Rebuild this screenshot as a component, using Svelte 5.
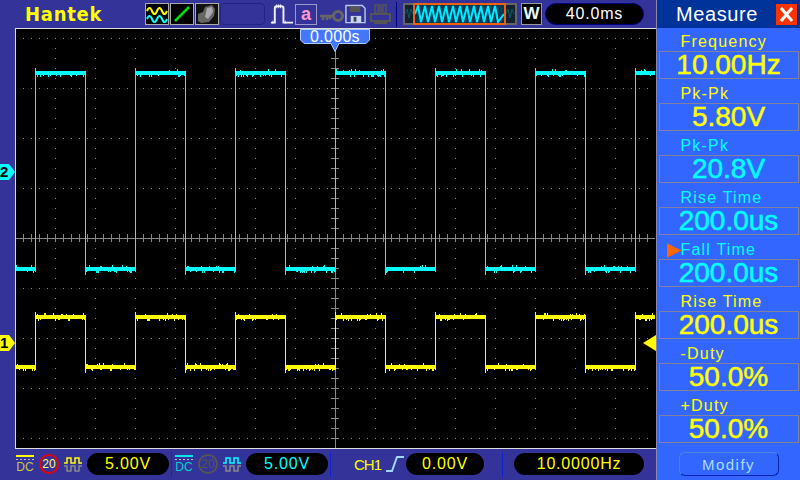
<script>
  const measures = [
    { label: 'Frequency', value: '10.00Hz', color: '#ffff00' },
    { label: 'Pk-Pk', value: '5.80V', color: '#ffff00' },
    { label: 'Pk-Pk', value: '20.8V', color: '#00ffff' },
    { label: 'Rise Time', value: '200.0us', color: '#00ffff' },
    { label: 'Fall Time', value: '200.0us', color: '#00ffff', selected: true },
    { label: 'Rise Time', value: '200.0us', color: '#ffff00' },
    { label: '-Duty', value: '50.0%', color: '#ffff00' },
    { label: '+Duty', value: '50.0%', color: '#ffff00' }
  ];

  // seeded noise so every render gives the same trace
  let seed = 7;
  function rnd() {
    seed = (seed * 16807) % 2147483647;
    return seed / 2147483647;
  }

  function band(x0, x1, top, h) {
    let d = '';
    for (let x = x0; x < x1; x++) {
      let t = top;
      let b = top + h;
      const r = rnd();
      if (r < 0.1) t -= 1 + Math.floor(rnd() * 2);
      if (r > 0.78) b += 1 + Math.floor(rnd() * 2);
      d += `M${x + 0.5} ${t}V${b}`;
    }
    return d;
  }

  function trace(high, low, h) {
    let d = band(16, 35, low, h);
    for (let x = 35; x < 655; x += 100) {
      d += `M${x + 0.5} ${high - 3}V${low + h + 1}`;
      d += band(x + 1, Math.min(x + 50, 655), high, h);
      if (x + 50 < 655) {
        d += `M${x + 50.5} ${high}V${low + h + 4}`;
        d += band(x + 51, Math.min(x + 100, 635), low, h);
      }
    }
    return d;
  }

  const cyanPath = trace(71, 267, 4);
  const yellowPath = trace(315, 365, 4);

  let gridDots = '';
  for (let y = 38; y < 448; y += 50) {
    for (let x = 23; x < 655; x += 8) gridDots += `M${x} ${y}h1`;
  }
  for (let x = 55; x < 655; x += 40) {
    for (let y = 38; y < 448; y += 10) gridDots += `M${x} ${y}h1`;
  }

  let axes = 'M16 238.5H655M335.5 50V448';
  for (let x = 23; x < 655; x += 8) axes += `M${x}.5 234V242`;
  for (let y = 58; y < 448; y += 10) axes += `M331 ${y}.5H339`;

  let zig = 'M415 14';
  for (let x = 416; x < 500; x += 7) zig += `L${x + 2} 6L${x + 5} 22`;
  zig += 'L504 14';
</script>

<div class="scope">
  <div class="left">
    <header class="topbar">
      <span class="brand">Hantek</span>
      <div class="tools">
        <svg class="tool" viewBox="0 0 24 22">
          <rect x="0.5" y="0.5" width="23" height="21" fill="#000" stroke="#aaa" />
          <path d="M2 8q2.500-6 5 0t5 0t5 0t5 0" fill="none" stroke="#ff0" stroke-width="2" />
          <path d="M2 16q2.500-6 5 0t5 0t5 0t5 0" fill="none" stroke="#0ff" stroke-width="2" />
        </svg>
        <svg class="tool" viewBox="0 0 24 22">
          <rect x="0.5" y="0.500" width="23" height="21" fill="#000" stroke="#aaa" />
          <path d="M5 18L19 4" stroke="#00e000" stroke-width="2.500" />
        </svg>
        <svg class="tool" viewBox="0 0 24 22">
          <rect x="0.5" y="0.5" width="23" height="21" fill="#111" stroke="#aaa" />
          <path d="M3 18V11L8 9L10 4L17 2L20 6L19 13L14 19L6 20Z" fill="#666" />
          <path d="M12 5L17 4L18 9L13 16L10 14Z" fill="#aaa" />
        </svg>
        <div class="blank"></div>
        <svg class="pulse" viewBox="0 0 26 22">
          <path d="M1 20H5V5Q5 3 7 3H12Q14 3 14 5V20H19H24" fill="none" stroke="#eef" stroke-width="2" />
          <path d="M7 1V5M9 1V5M11 1V5M3 18V21M16 18V21" stroke="#eef" />
        </svg>
        <div class="letter">a</div>
        <svg class="key" viewBox="0 0 24 12">
          <circle cx="18" cy="6" r="4.500" fill="none" stroke="#666" stroke-width="3" />
          <path d="M0 6H14M3 6V10M7 6V10M10 6V9" stroke="#666" stroke-width="2.500" fill="none" />
        </svg>
        <svg class="floppy" viewBox="0 0 22 20">
          <path d="M1 1H18L21 4V19H1Z" fill="none" stroke="#b8c8e8" stroke-width="1.500" />
          <path d="M5 2H16V8H5Z" fill="#555" />
          <path d="M6 12H17V19H6Z" fill="#c8d8f0" />
          <path d="M9 13H12V18H9Z" fill="#445" />
        </svg>
        <svg class="printer" viewBox="0 0 21 21">
          <path d="M5 1H16V9H5ZM7 3H14M7 5H14M7 7H14" fill="none" stroke="#555" stroke-width="1.500" />
          <path d="M1 10H20V17H1Z" fill="none" stroke="#555" stroke-width="2" />
          <path d="M4 18H17V20H4Z" fill="#555" />
        </svg>
      </div>
      <i class="sep"></i>
      <svg class="overview" viewBox="403 0 115 28">
        <rect x="404" y="4" width="112" height="20" fill="#13222e" stroke="#666" stroke-width="2" />
        <path d="M405 14l2-5 2 9 2-9 2 5M506 14l2-5 2 9 2-9 2 5" fill="none" stroke="#0a5a66" />
        <rect x="414" y="4" width="91" height="20" fill="#003a55" />
        <path d={zig} fill="none" stroke="#00e8ff" stroke-width="2" />
        <rect x="414" y="4" width="91" height="20" fill="none" stroke="#f06010" stroke-width="2" />
      </svg>
      <div class="wbox">W</div>
      <div class="pill timebase">40.0ms</div>
    </header>

    <div class="middle">
      <div class="gutter">
        <span class="chan two">2</span>
        <span class="chan one">1</span>
      </div>
      <div class="plot">
        <svg class="screen" viewBox="16 29 640 419" shape-rendering="crispEdges">
          <path d={gridDots} stroke="#888" fill="none" transform="translate(0 0.5)" />
          <path d={axes} stroke="#888" fill="none" />
          <path d={cyanPath} stroke="#00ffff" fill="none" />
          <path d={yellowPath} stroke="#ffff00" fill="none" />
          <polygon points="643,343 656,335 656,351" fill="#ffff00" shape-rendering="auto" />
        </svg>
        <div class="timetag">
          <svg viewBox="0 0 70 23">
            <path d="M0.500 0.500H69.500V11L66 14.500H39L35 22.500L31 14.500H4L0.500 11Z" fill="#4477ff" stroke="#aaccff" />
          </svg>
          <span>0.000s</span>
        </div>
      </div>
    </div>

    <footer class="bottombar">
      <div class="coupling yellow"><i></i><i class="dash"></i><span>DC</span></div>
      <div class="limit on">20</div>
      <svg class="wave" viewBox="0 0 18 16">
        <path d="M0 7H3V2H7V7H11V2H15V7H18" fill="none" stroke="#ff0" stroke-width="1.500" />
        <path d="M0 10H3V15H7V10H11V15H15V10H18" fill="none" stroke="#888" stroke-width="1.500" />
      </svg>
      <div class="pill volts yellowtext">5.00V</div>
      <i class="divider"></i>
      <div class="coupling cyan"><i></i><i class="dash"></i><span>DC</span></div>
      <div class="limit">20</div>
      <svg class="wave" viewBox="0 0 18 16">
        <path d="M0 7H3V2H7V7H11V2H15V7H18" fill="none" stroke="#0ff" stroke-width="1.500" />
        <path d="M0 10H3V15H7V10H11V15H15V10H18" fill="none" stroke="#888" stroke-width="1.500" />
      </svg>
      <div class="pill volts cyantext">5.00V</div>
      <i class="divider"></i>
      <span class="source">CH1</span>
      <svg class="edge" viewBox="0 0 18 16">
        <path d="M0 15H6L11 1H18" fill="none" stroke="#9fd8ff" stroke-width="2" />
      </svg>
      <div class="pill level yellowtext">0.00V</div>
      <i class="divider freqdiv"></i>
      <div class="pill freq yellowtext">10.0000Hz</div>
    </footer>
  </div>

  <aside class="panel">
    <div class="head">
      <span>Measure</span>
      <svg class="close" viewBox="0 0 21 21">
        <rect width="21" height="21" fill="#ff3300" />
        <path d="M5 4L16 17M16 4L5 17" stroke="#fff" stroke-width="3" />
      </svg>
    </div>
    {#each measures as m}
      <div class="item" style="color: {m.color}">
        <div class="label">
          {#if m.selected}<i class="arrow"></i>{/if}{m.label}
        </div>
        <div class="value">{m.value}</div>
      </div>
    {/each}
    <button class="modify">Modify</button>
  </aside>
</div>

<style>
  :global(body) {
    background: #333399;
  }
  .scope {
    display: flex;
    width: 800px;
    height: 480px;
    overflow: hidden;
    font-family: "Liberation Sans", Arial, sans-serif;
    background: #333399;
  }
  .left {
    width: 656px;
    display: flex;
    flex-direction: column;
  }
  .topbar {
    height: 28px;
    display: flex;
    align-items: center;
    flex-shrink: 0;
  }
  .brand {
    width: 145px;
    padding-left: 25px;
    box-sizing: border-box;
    color: #ffff00;
    font-size: 20px;
    font-weight: bold;
    letter-spacing: 0.8px;
    font-family: "DejaVu Sans", sans-serif;
    transform: scaleX(0.9);
    transform-origin: 25px 0;
  }
  .tools {
    display: flex;
    align-items: center;
    width: 251px;
  }
  .tool {
    width: 24px;
    height: 22px;
    margin-right: 1px;
    flex-shrink: 0;
  }
  .blank {
    width: 45px;
    height: 22px;
    margin-right: 5px;
    border: 1px solid #222288;
    border-radius: 4px;
    box-sizing: border-box;
  }
  .pulse {
    width: 25px;
    height: 22px;
    flex-shrink: 0;
  }
  .letter {
    width: 22px;
    height: 21px;
    box-sizing: border-box;
    border: 1px solid #9a9ac8;
    color: #ff99cc;
    background: #333399;
    font: bold 18px/18px "Liberation Sans", sans-serif;
    text-align: center;
    flex-shrink: 0;
  }
  .key {
    width: 24px;
    height: 12px;
    margin: 3px 1px 0 3px;
    flex-shrink: 0;
  }
  .floppy {
    width: 21px;
    height: 20px;
    margin-right: 4px;
    flex-shrink: 0;
  }
  .printer {
    width: 21px;
    height: 21px;
    flex-shrink: 0;
  }
  .sep {
    width: 1px;
    height: 25px;
    background: #000080;
  }
  .overview {
    width: 115px;
    height: 28px;
    margin-left: 6px;
    flex-shrink: 0;
  }
  .wbox {
    width: 21px;
    height: 22px;
    margin-left: 3px;
    box-sizing: border-box;
    border: 1px solid #999;
    background: #000;
    color: #e8f8f8;
    font: bold 17px/20px "Liberation Sans", sans-serif;
    text-align: center;
  }
  .pill {
    background: #000;
    border-radius: 11px;
    text-align: center;
    box-sizing: border-box;
    flex-shrink: 0;
  }
  .timebase {
    width: 99px;
    height: 22px;
    margin-left: 3px;
    border: 1px solid #000080;
    color: #fff;
    font-size: 16px;
    line-height: 20px;
    letter-spacing: 0.8px;
  }
  .middle {
    flex: 1;
    display: flex;
    min-height: 0;
  }
  .gutter {
    width: 15px;
    position: relative;
    flex-shrink: 0;
  }
  .chan {
    position: absolute;
    left: 0;
    width: 15px;
    height: 16px;
    color: #000;
    font: bold 15px/16px "Liberation Sans", sans-serif;
    clip-path: polygon(0 0, 60% 0, 100% 50%, 60% 100%, 0 100%);
    box-sizing: border-box;
  }
  .two {
    top: 136px;
    background: #00ffff;
  }
  .one {
    top: 307px;
    background: #ffff00;
  }
  .plot {
    flex: 1;
    position: relative;
    border-top: 1px solid #ddd;
    border-left: 1px solid #ddd;
    border-bottom: 1px solid #ddd;
    background: #000;
    height: 419px;
  }
  .screen {
    display: block;
    width: 640px;
    height: 419px;
    overflow: visible;
  }
  .timetag {
    position: absolute;
    left: 284px;
    top: 0;
    width: 70px;
    height: 23px;
    color: #fff;
    font-size: 16px;
    line-height: 15px;
    letter-spacing: 0.3px;
    text-align: center;
  }
  .timetag svg {
    position: absolute;
    left: 0;
    top: 0;
    width: 70px;
    height: 23px;
  }
  .timetag span {
    position: relative;
  }
  .bottombar {
    height: 32px;
    display: flex;
    align-items: center;
    padding-left: 16px;
    color: #fff;
    flex-shrink: 0;
  }
  .coupling {
    width: 18px;
    display: flex;
    flex-direction: column;
    align-items: center;
  }
  .coupling i {
    width: 100%;
    height: 2px;
  }
  .coupling .dash {
    height: 1px;
    margin-top: 2px;
    background: repeating-linear-gradient(90deg, #bbb 0 2px, transparent 2px 4px) !important;
  }
  .coupling span {
    font-size: 12px;
    line-height: 12px;
    margin-top: 1px;
  }
  .coupling.yellow i {
    background: #ffff00;
  }
  .coupling.yellow span {
    color: #c8c840;
  }
  .coupling.cyan i {
    background: #00e8e8;
  }
  .coupling.cyan span {
    color: #00d0d0;
  }
  .limit {
    width: 20px;
    height: 20px;
    margin-left: 5px;
    box-sizing: border-box;
    border: 2px solid #555;
    border-radius: 50%;
    color: #555;
    font-size: 12px;
    line-height: 16px;
    text-align: center;
    flex-shrink: 0;
  }
  .limit.on {
    border-color: #ee0000;
    color: #ffff66;
  }
  .wave {
    width: 18px;
    height: 16px;
    margin-left: 5px;
    flex-shrink: 0;
  }
  .volts {
    width: 82px;
    height: 22px;
    margin-left: 5px;
    font-size: 16px;
    line-height: 22px;
    letter-spacing: 0.8px;
  }
  .yellowtext {
    color: #ffff00;
  }
  .cyantext {
    color: #00ffff;
  }
  .divider {
    width: 1px;
    height: 25px;
    margin: 0 3px 0 2px;
    background: #1122cc;
    flex-shrink: 0;
  }
  .source {
    margin-left: 20px;
    width: 32px;
    color: #ffff00;
    font-size: 15px;
    letter-spacing: -1px;
    flex-shrink: 0;
  }
  .edge {
    width: 18px;
    height: 16px;
    flex-shrink: 0;
  }
  .level {
    width: 78px;
    height: 22px;
    margin-left: 2px;
    font-size: 16px;
    line-height: 22px;
    letter-spacing: 0.8px;
  }
  .freqdiv {
    margin: 0 11px 0 18px;
  }
  .freq {
    width: 130px;
    height: 22px;
    font-size: 16px;
    line-height: 22px;
    letter-spacing: 0.8px;
  }
  .panel {
    width: 144px;
    background: #3366ff;
    display: flex;
    flex-direction: column;
    align-items: center;
    border-left: 1px solid #8888aa;
    box-sizing: border-box;
  }
  .head {
    width: 143px;
    height: 28px;
    background: #003399;
    color: #fff;
    display: flex;
    align-items: center;
    font-size: 20px;
    letter-spacing: 0.6px;
    padding-left: 19px;
    box-sizing: border-box;
    flex-shrink: 0;
  }
  .close {
    width: 21px;
    height: 21px;
    margin-left: 18px;
  }
  .item {
    width: 140px;
    height: 52px;
    flex-shrink: 0;
  }
  .label {
    height: 23px;
    padding-left: 22px;
    box-sizing: border-box;
    font-size: 16px;
    line-height: 27px;
    letter-spacing: 1.2px;
    position: relative;
    white-space: nowrap;
  }
  .arrow {
    position: absolute;
    left: 8px;
    top: 7px;
    width: 15px;
    height: 15px;
    background: #ff6600;
    clip-path: polygon(0 0, 100% 50%, 0 100%);
  }
  .value {
    height: 28px;
    box-sizing: border-box;
    border: 1px solid #8080a0;
    font-size: 28px;
    line-height: 25px;
    text-align: center;
    white-space: nowrap;
    -webkit-text-stroke: 0.5px currentColor;
  }
  .modify {
    width: 100px;
    height: 24px;
    margin-top: 8px;
    padding: 0;
    background: #3366ff;
    border: 1px solid #4488dd;
    border-bottom-color: #0022aa;
    border-right-color: #0022aa;
    border-radius: 6px;
    color: #aaddff;
    font: 15px "Liberation Sans", sans-serif;
    letter-spacing: 1.5px;
    flex-shrink: 0;
  }
</style>
